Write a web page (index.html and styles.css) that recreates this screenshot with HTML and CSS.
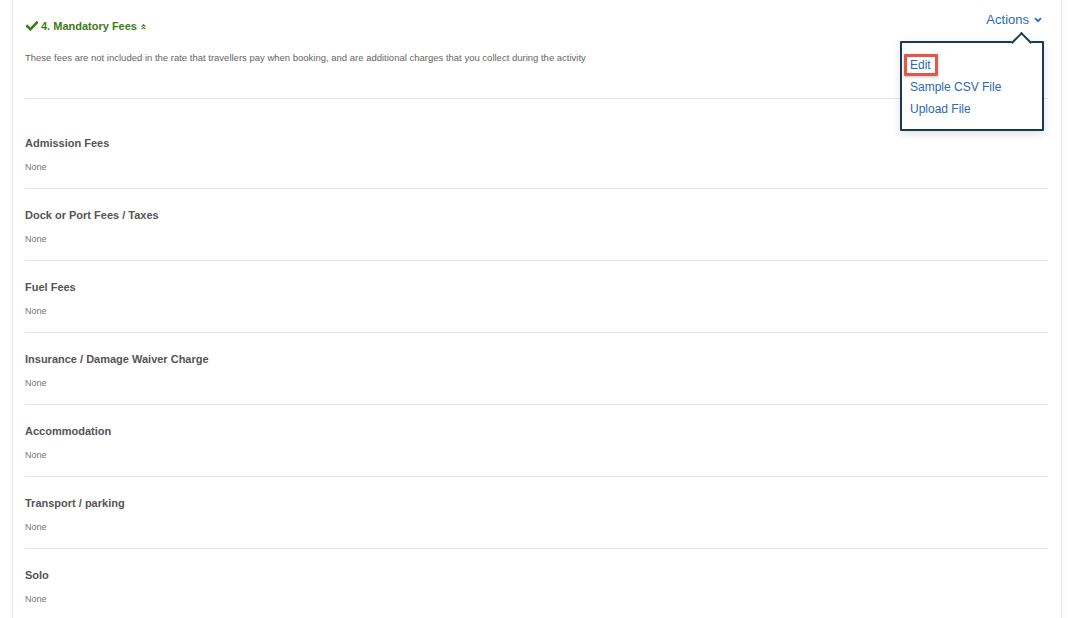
FILE: index.html
```html
<!DOCTYPE html>
<html>
<head>
<meta charset="utf-8">
<link rel="stylesheet" href="styles.css">
</head>
<body>
<div class="card">
  <div class="head">
    <div class="head-top">
      <div class="title">
        <svg class="check" width="12" height="10" viewBox="0 0 12 10"><path d="M1.2 5.2 L4.4 8.3 L10.8 1.6" fill="none" stroke="#3b7d12" stroke-width="2.6" stroke-linecap="square"/></svg>
        <span>4. Mandatory Fees</span>
        <svg class="dbl" width="5" height="6" viewBox="0 0 5 6"><path d="M0.6 2.6 L2.5 0.8 L4.4 2.6 M0.6 5.2 L2.5 3.4 L4.4 5.2" fill="none" stroke="#3b7d12" stroke-width="1.1"/></svg>
      </div>
      <div class="actions">
        <span class="actions-btn">Actions
          <svg width="8" height="6" viewBox="0 0 8 6"><path d="M1 1.2 L4 4.2 L7 1.2" fill="none" stroke="#2c6cb3" stroke-width="1.8"/></svg>
        </span>
        <div class="menu">
          <a class="item edit">Edit</a>
          <a class="item">Sample CSV File</a>
          <a class="item">Upload File</a>
        </div>
      </div>
    </div>
    <p class="desc">These fees are not included in the rate that travellers pay when booking, and are additional charges that you collect during the activity</p>
  </div>
  <div class="list">
    <div class="row"><div class="label">Admission Fees</div><div class="val">None</div></div>
    <div class="row"><div class="label">Dock or Port Fees / Taxes</div><div class="val">None</div></div>
    <div class="row"><div class="label">Fuel Fees</div><div class="val">None</div></div>
    <div class="row"><div class="label">Insurance / Damage Waiver Charge</div><div class="val">None</div></div>
    <div class="row"><div class="label">Accommodation</div><div class="val">None</div></div>
    <div class="row"><div class="label">Transport / parking</div><div class="val">None</div></div>
    <div class="row"><div class="label">Solo</div><div class="val">None</div></div>
  </div>
</div>
</body>
</html>
```
FILE: styles.css
```css
html, body {
  margin: 0;
  padding: 0;
  background: #ffffff;
  font-family: "Liberation Sans", Arial, Helvetica, sans-serif;
  overflow: hidden;
  height: 618px;
}
.card {
  margin-left: 12px;
  width: 1023px;
  padding: 13px 13px 0 12px;
  border-left: 1px solid #ececec;
  border-right: 1px solid #e6e6e6;
  box-shadow: 0 -2px 6px rgba(0,0,0,0.04);
  min-height: 618px;
  background: #fff;
}
.head {
  border-bottom: 1px solid #e6e6e6;
  padding-bottom: 35px;
}
.head-top {
  display: flex;
  justify-content: space-between;
  align-items: flex-start;
}
.title {
  margin-top: 6px;
  display: flex;
  align-items: center;
  gap: 3px;
  color: #3b7d12;
  font-size: 11px;
  font-weight: bold;
  line-height: 14px;
}
.check { margin-left: 1px; margin-right: 0; }
.dbl { margin-left: 1px; margin-top: 1px; }
.actions {
  position: relative;
  padding-right: 6px;
}
.actions-btn {
  display: flex;
  align-items: center;
  gap: 5px;
  color: #2c6cb3;
  font-size: 13px;
  line-height: 14px;
}
.menu {
  box-sizing: border-box;
  position: absolute;
  top: 28px;
  right: 4px;
  width: 144px;
  height: 90px;
  border: 2px solid #1a3858;
  border-radius: 1px;
  background: #fff;
  box-shadow: 0 3px 8px rgba(0,0,0,0.12);
  padding: 11px 0 0 8px;
  display: flex;
  flex-direction: column;
  align-items: flex-start;
}
.menu::before {
  content: "";
  position: absolute;
  top: -8px;
  left: 112px;
  width: 13px;
  height: 13px;
  background: #fff;
  border-top: 2px solid #1a3858;
  border-left: 2px solid #1a3858;
  transform: rotate(45deg);
}
.item {
  color: #2c69ae;
  font-size: 12px;
  line-height: 22px;
  cursor: pointer;
}
.edit {
  position: relative;
}
.edit::after {
  content: "";
  position: absolute;
  left: -6px;
  top: 0px;
  width: 28px;
  height: 16px;
  border: 3px solid #e4564a;
  border-radius: 1px;
  box-shadow: 0 1px 3px rgba(0,0,0,0.25);
}
.desc {
  margin: 20px 0 0 0;
  font-size: 9.5px;
  line-height: 10px;
  color: #666;
}
.list {
  margin-top: 18px;
}
.row {
  padding: 20px 0 16px 0;
  border-bottom: 1px solid #e6e6e6;
}
.label {
  font-size: 11px;
  font-weight: bold;
  line-height: 13px;
  color: #555;
}
.val {
  margin-top: 12px;
  font-size: 9px;
  line-height: 10px;
  color: #777;
}
```
